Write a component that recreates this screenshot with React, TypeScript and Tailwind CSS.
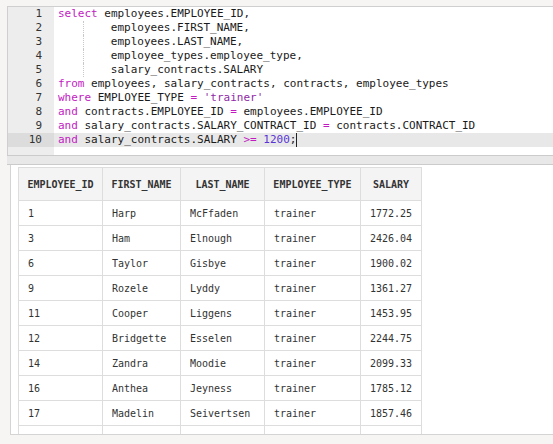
import React from "react";

type Tok = { t: string; c?: string };

const KW = "text-[#c21bc2]";
const STR = "text-[#8f2aa6]";
const NUM = "text-[#5a34d6]";

const lines: { indent?: boolean; toks: Tok[] }[] = [
  { toks: [{ t: "select", c: KW }, { t: " employees.EMPLOYEE_ID," }] },
  { indent: true, toks: [{ t: "employees.FIRST_NAME," }] },
  { indent: true, toks: [{ t: "employees.LAST_NAME," }] },
  { indent: true, toks: [{ t: "employee_types.employee_type," }] },
  { indent: true, toks: [{ t: "salary_contracts.SALARY" }] },
  { toks: [{ t: "from", c: KW }, { t: " employees, salary_contracts, contracts, employee_types" }] },
  { toks: [{ t: "where", c: KW }, { t: " EMPLOYEE_TYPE " }, { t: "=", c: KW }, { t: " " }, { t: "'trainer'", c: STR }] },
  { toks: [{ t: "and", c: KW }, { t: " contracts.EMPLOYEE_ID " }, { t: "=", c: KW }, { t: " employees.EMPLOYEE_ID" }] },
  { toks: [{ t: "and", c: KW }, { t: " salary_contracts.SALARY_CONTRACT_ID " }, { t: "=", c: KW }, { t: " contracts.CONTRACT_ID" }] },
  { toks: [{ t: "and", c: KW }, { t: " salary_contracts.SALARY " }, { t: ">=", c: KW }, { t: " " }, { t: "1200", c: NUM }, { t: ";" }] },
];

const rows: string[][] = [
  ["1", "Harp", "McFfaden", "trainer", "1772.25"],
  ["3", "Ham", "Elnough", "trainer", "2426.04"],
  ["6", "Taylor", "Gisbye", "trainer", "1900.02"],
  ["9", "Rozele", "Lyddy", "trainer", "1361.27"],
  ["11", "Cooper", "Liggens", "trainer", "1453.95"],
  ["12", "Bridgette", "Esselen", "trainer", "2244.75"],
  ["14", "Zandra", "Moodie", "trainer", "2099.33"],
  ["16", "Anthea", "Jeyness", "trainer", "1785.12"],
  ["17", "Madelin", "Seivertsen", "trainer", "1857.46"],
  ["18", "Dorey", "Muncer", "trainer", "1911.30"],
];

const headers = ["EMPLOYEE_ID", "FIRST_NAME", "LAST_NAME", "EMPLOYEE_TYPE", "SALARY"];
const widths = ["w-[84px]", "w-[78px]", "w-[84px]", "w-[96px]", "w-[61px]"];

export default function App() {
  return (
    <div className="w-[553px] h-[444px] overflow-hidden bg-[#f6f5f3] pt-[6px] pl-[7px] flex flex-col">
      {/* editor */}
      <div className="border-t border-l border-[#cfcfcf] bg-white font-['DejaVu_Sans_Mono',monospace] text-[11px] leading-[14px] text-[#1a1a1a]">
        {lines.map((ln, i) => {
          const active = i === lines.length - 1;
          return (
            <div key={i} className={`flex h-[14px] ${active ? "bg-[#e8e8e8]" : ""}`}>
              <div
                className={`w-[46px] shrink-0 text-right pr-[12px] text-[#333] ${
                  active ? "bg-[#dcdcdc]" : "bg-[#ededed]"
                }`}
              >
                {i + 1}
              </div>
              <div className="pl-[4px] whitespace-pre flex">
                {ln.indent && (
                  <>
                    <span className="inline-block w-[26.4px] h-[14px] border-r border-dotted border-[#c8c8c8]" />
                    <span className="inline-block w-[26.4px]" />
                  </>
                )}
                {ln.toks.map((tk, j) => (
                  <span key={j} className={tk.c}>
                    {tk.t}
                  </span>
                ))}
                {active && <span className="inline-block w-0 h-[14px] border-l border-[#222]" />}
              </div>
            </div>
          );
        })}
        <div className="flex h-[8px]">
          <div className="w-[46px] bg-[#ededed]" />
        </div>
      </div>

      {/* splitter */}
      <div className="h-[10px] shrink-0 bg-[#e8e8e8] border-t border-b border-[#cbcbcb]" />

      {/* results */}
      <div className="ml-[3px] h-[270px] shrink-0 overflow-hidden bg-white border-l border-b border-[#d4d4d4] pl-[7px] pt-[2px]">
        <table className="table-fixed w-[403px] border-collapse font-['DejaVu_Sans_Mono',monospace] text-[10px] text-[#333]">
          <colgroup>
            {widths.map((w, i) => (
              <col key={i} className={w} />
            ))}
          </colgroup>
          <thead>
            <tr className="h-[33px] bg-[#f4f4f4]">
              {headers.map((h) => (
                <th key={h} className="border border-[#dddddd] font-bold text-center px-[8px] whitespace-nowrap">
                  {h}
                </th>
              ))}
            </tr>
          </thead>
          <tbody>
            {rows.map((r, i) => (
              <tr key={i} className="h-[25px]">
                {r.map((v, j) => (
                  <td key={j} className="border border-[#dddddd] text-left px-[9px] whitespace-nowrap">
                    {v}
                  </td>
                ))}
              </tr>
            ))}
          </tbody>
        </table>
      </div>
    </div>
  );
}
